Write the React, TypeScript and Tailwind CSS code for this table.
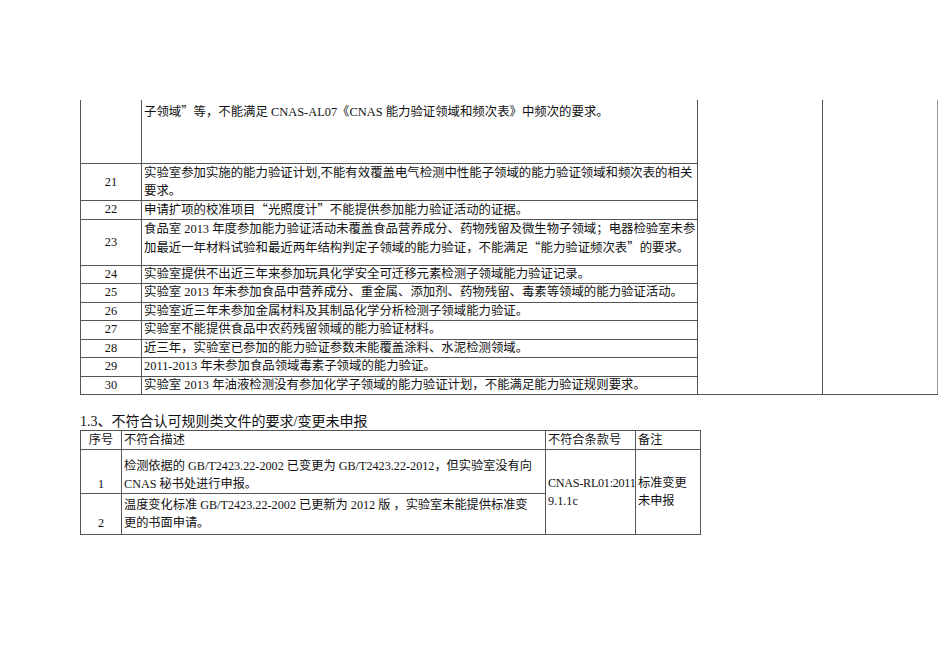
import React from "react";

type Row = {
  no: string;
  lines: string[];
  height: string;
};

const rows: Row[] = [
  { no: "21", lines: ["实验室参加实施的能力验证计划,不能有效覆盖电气检测中性能子领域的能力验证领域和频次表的相关", "要求。"], height: "h-[36px]" },
  { no: "22", lines: ["申请扩项的校准项目“光照度计”不能提供参加能力验证活动的证据。"], height: "h-[19px]" },
  {
    no: "23",
    lines: [
      "食品室 2013 年度参加能力验证活动未覆盖食品营养成分、药物残留及微生物子领域；电器检验室未参",
      "加最近一年材料试验和最近两年结构判定子领域的能力验证，不能满足“能力验证频次表”的要求。",
    ],
    height: "h-[46px]",
  },
  { no: "24", lines: ["实验室提供不出近三年来参加玩具化学安全可迁移元素检测子领域能力验证记录。"], height: "h-[18px]" },
  { no: "25", lines: ["实验室 2013 年未参加食品中营养成分、重金属、添加剂、药物残留、毒素等领域的能力验证活动。"], height: "h-[19px]" },
  { no: "26", lines: ["实验室近三年未参加金属材料及其制品化学分析检测子领域能力验证。"], height: "h-[18px]" },
  { no: "27", lines: ["实验室不能提供食品中农药残留领域的能力验证材料。"], height: "h-[19px]" },
  { no: "28", lines: ["近三年，实验室已参加的能力验证参数未能覆盖涂料、水泥检测领域。"], height: "h-[18px]" },
  { no: "29", lines: ["2011-2013 年未参加食品领域毒素子领域的能力验证。"], height: "h-[19px]" },
  { no: "30", lines: ["实验室 2013 年油液检测没有参加化学子领域的能力验证计划，不能满足能力验证规则要求。"], height: "h-[18px]" },
];

const cell = "border border-[#555] p-0 overflow-visible";

// curly quotes should take the full-width CJK glyphs, not the Latin ones
function Text({ value }: { value: string }) {
  const parts = value.split(/([“”])/);
  return (
    <>
      {parts.map((part, i) =>
        part === "“" || part === "”" ? (
          <span key={i} className="font-['Noto_Sans_CJK_SC',sans-serif]">
            {part}
          </span>
        ) : (
          <React.Fragment key={i}>{part}</React.Fragment>
        )
      )}
    </>
  );
}

function Lines({ lines }: { lines: string[] }) {
  return (
    <>
      {lines.map((line, i) => (
        <div key={i} className="whitespace-nowrap">
          <Text value={line} />
        </div>
      ))}
    </>
  );
}

export default function App() {
  return (
    <div className="min-h-[672px] w-[950px] bg-white pl-[80px] pt-[100px] font-['Liberation_Serif','Noto_Sans_CJK_SC',serif] text-[12.4px] leading-[18px] text-[#111]">
      <table className="w-[857px] table-fixed border-collapse">
        <colgroup>
          <col className="w-[61px]" />
          <col className="w-[556px]" />
          <col className="w-[125px]" />
          <col className="w-[115px]" />
        </colgroup>
        <tbody>
          <tr className="h-[63px]">
            <td className={`${cell} border-t-0`} />
            <td className={`${cell} border-t-0 pl-[2px] pt-[2px] align-top`}>
              <Lines lines={["子领域”等，不能满足 CNAS-AL07《CNAS 能力验证领域和频次表》中频次的要求。"]} />
            </td>
            <td className={`${cell} border-t-0`} rowSpan={rows.length + 1} />
            <td className={`${cell} border-t-0 border-r-[#999]`} rowSpan={rows.length + 1} />
          </tr>
          {rows.map((row) => {
            const single = row.lines.length === 1;
            return (
              <tr key={row.no} className={row.height}>
                <td className={`${cell} text-center align-middle ${single ? "leading-[17px]" : ""}`}>{row.no}</td>
                <td className={`${cell} pl-[2px] align-top ${single ? "leading-[17px]" : ""}`}>
                  <Lines lines={row.lines} />
                </td>
              </tr>
            );
          })}
        </tbody>
      </table>

      <div className="mt-[19px] text-[14px] leading-[16px]">1.3、不符合认可规则类文件的要求/变更未申报</div>

      <table className="w-[620px] table-fixed border-collapse text-[12.2px]">
        <colgroup>
          <col className="w-[41px]" />
          <col className="w-[424px]" />
          <col className="w-[90px]" />
          <col className="w-[65px]" />
        </colgroup>
        <tbody>
          <tr className="h-[19px]">
            <td className={`${cell} text-center`}>序号</td>
            <td className={`${cell} pl-[2px]`}>不符合描述</td>
            <td className={`${cell} pl-[2px]`}>不符合条款号</td>
            <td className={`${cell} pl-[2px]`}>备注</td>
          </tr>
          <tr className="h-[44px]">
            <td className={`${cell} text-center align-bottom`}>1</td>
            <td className={`${cell} pl-[2px] align-bottom`}>
              <Lines lines={["检测依据的 GB/T2423.22-2002 已变更为 GB/T2423.22-2012，但实验室没有向", "CNAS 秘书处进行申报。"]} />
            </td>
            <td className={`${cell} pl-[2px] align-middle`} rowSpan={2}>
              <div className="whitespace-nowrap tracking-[-0.3px]">CNAS-RL01:2011</div>
              <div className="whitespace-nowrap">9.1.1c</div>
            </td>
            <td className={`${cell} pl-[2px] align-middle`} rowSpan={2}>
              <Lines lines={["标准变更", "未申报"]} />
            </td>
          </tr>
          <tr className="h-[41px]">
            <td className={`${cell} pb-[2px] text-center align-bottom`}>2</td>
            <td className={`${cell} pb-[2px] pl-[2px] align-bottom`}>
              <Lines lines={["温度变化标准 GB/T2423.22-2002 已更新为 2012 版 ，实验室未能提供标准变", "更的书面申请。"]} />
            </td>
          </tr>
        </tbody>
      </table>
    </div>
  );
}
